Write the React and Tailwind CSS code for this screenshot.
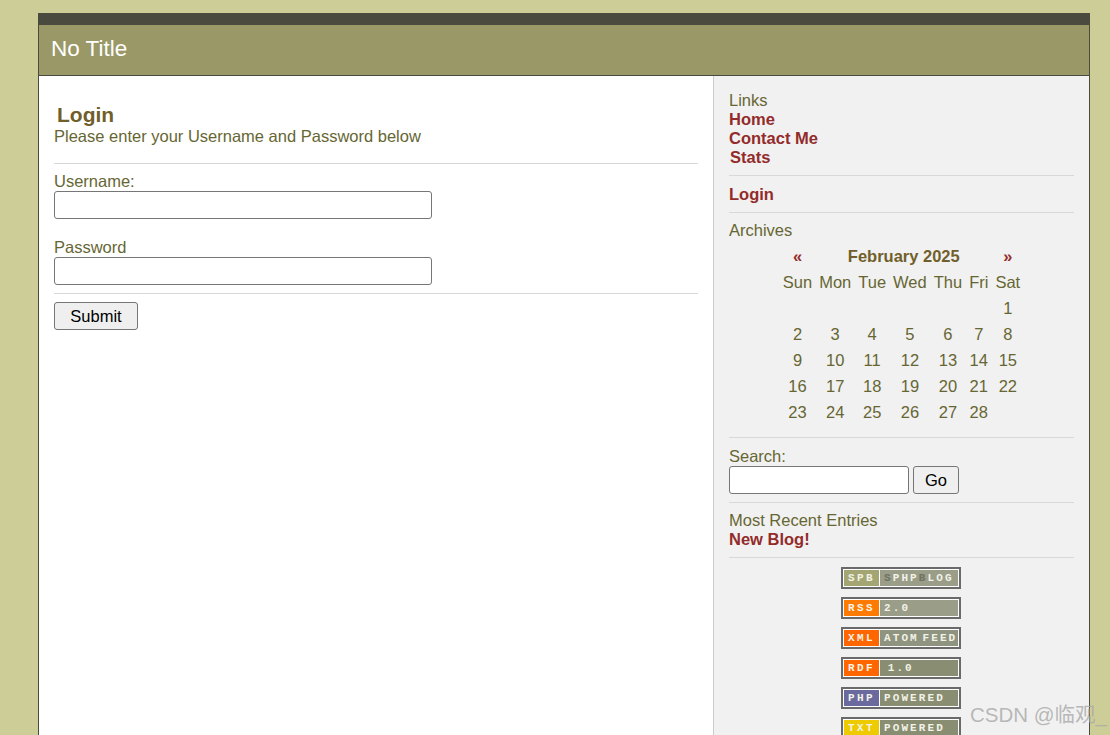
import React from 'react';

const calendarWeeks = [
    ['', '', '', '', '', '', '1'],
    ['2', '3', '4', '5', '6', '7', '8'],
    ['9', '10', '11', '12', '13', '14', '15'],
    ['16', '17', '18', '19', '20', '21', '22'],
    ['23', '24', '25', '26', '27', '28', ''],
];

const dimLetter = 'text-[#6f7263]';

const badges = [
    {
        left: 'SPB',
        right: (
            <>
                <span className={dimLetter}>S</span>PHP<span className={dimLetter}>B</span>LOG
            </>
        ),
        leftBg: 'bg-[#a3a572]',
        rightBg: 'bg-[#9a9d88]',
    },
    { left: 'RSS', right: '2.0', leftBg: 'bg-[#ff7a00]', rightBg: 'bg-[#9a9d88]' },
    { left: 'XML', right: 'ATOM FEED', leftBg: 'bg-[#ff6600]', rightBg: 'bg-[#8f9480]' },
    { left: 'RDF', right: ' 1.0', leftBg: 'bg-[#ff6600]', rightBg: 'bg-[#898d72]' },
    { left: 'PHP', right: 'POWERED', leftBg: 'bg-[#6a6a9f]', rightBg: 'bg-[#898d72]' },
    { left: 'TXT', right: 'POWERED', leftBg: 'bg-[#eecb00]', rightBg: 'bg-[#898d72]' },
];

function Badge({ left, right, leftBg, rightBg }) {
    return (
        <div className="flex h-[22px] w-[120px] shrink-0 border-2 border-[#6a6a6a] bg-white p-px font-['Liberation_Mono',monospace] text-[11px] font-bold leading-[16px] tracking-[2.1px] text-[#f2f2e6] [word-spacing:-5px]">
            <span className={`w-[35px] shrink-0 text-center tracking-[2.4px] ${leftBg}`}>{left}</span>
            <span className={`ml-px min-w-0 flex-1 overflow-hidden whitespace-pre pl-[4px] ${rightBg}`}>{right}</span>
        </div>
    );
}

function Divider({ className = '' }) {
    return <div className={`h-px bg-[#d8d8d8] ${className}`} />;
}

function Sidebar() {
    return (
        <aside className="w-[376px] shrink-0 border-l border-[#cccccc] bg-[#f1f1f1] px-[15px] pt-[15px]">
            <div>Links</div>
            <a className="block font-bold text-[#932b2b]">Home</a>
            <a className="block font-bold text-[#932b2b]">Contact Me</a>
            <a className="ml-px block font-bold text-[#932b2b]">Stats</a>
            <Divider className="mt-[8px]" />
            <a className="mt-[9px] block font-bold text-[#932b2b]">Login</a>
            <Divider className="mt-[8px]" />
            <div className="mt-[8px]">Archives</div>

            {/* Calendar */}
            <table className="mx-auto mt-[3px] border-separate border-spacing-x-[3px] border-spacing-y-0 text-center">
                <tbody>
                    <tr className="h-[26px]">
                        <td className="font-bold text-[#932b2b]">«</td>
                        <td colSpan={5} className="font-bold text-[#705f2a]">February 2025</td>
                        <td className="font-bold text-[#932b2b]">»</td>
                    </tr>
                    <tr className="h-[26px]">
                        {['Sun', 'Mon', 'Tue', 'Wed', 'Thu', 'Fri', 'Sat'].map((day) => (
                            <td key={day} className="px-[2px]">{day}</td>
                        ))}
                    </tr>
                    {calendarWeeks.map((week, i) => (
                        <tr key={i} className="h-[26px]">
                            {week.map((day, j) => (
                                <td key={j} className="px-[2px]">{day}</td>
                            ))}
                        </tr>
                    ))}
                </tbody>
            </table>

            <Divider className="mt-[12px]" />
            <div className="mt-[9px]">Search:</div>
            <div className="flex gap-[4px]">
                <input className="h-[28px] w-[180px] rounded-[3px] border border-[#767676] bg-white" />
                <button className="h-[28px] w-[46px] rounded-[3px] border border-[#767676] bg-[#efefef] text-black">Go</button>
            </div>
            <Divider className="mt-[8px]" />
            <div className="mt-[8px]">Most Recent Entries</div>
            <a className="block font-bold text-[#932b2b]">New Blog!</a>
            <Divider className="mt-[8px]" />

            <div className="ml-[-1px] mt-[9px] flex flex-col items-center gap-[8px]">
                {badges.map((badge) => (
                    <Badge key={badge.left} {...badge} />
                ))}
            </div>
        </aside>
    );
}

function LoginForm() {
    return (
        <main className="flex-1 bg-white px-[15px] pt-[26px]">
            <h2 className="ml-[3px] text-[21px] font-bold leading-[25px] text-[#705f2a]">Login</h2>
            <p>Please enter your Username and Password below</p>
            <Divider className="mt-[17px]" />
            <label className="mt-[8px] block">Username:</label>
            <input className="block h-[28px] w-[378px] rounded-[3px] border border-[#767676] bg-white" />
            <label className="mt-[19px] block">Password</label>
            <input className="block h-[28px] w-[378px] rounded-[3px] border border-[#767676] bg-white" />
            <Divider className="mt-[8px]" />
            <button className="mt-[8px] h-[28px] w-[84px] rounded-[3px] border border-[#767676] bg-[#efefef] text-black">Submit</button>
        </main>
    );
}

function App() {
    return (
        <div className="relative h-[735px] overflow-hidden bg-[#cdcd98] pl-[38px] pr-[20px] pt-[13px] font-['Liberation_Sans',Arial,sans-serif] text-[16.5px] leading-[19px] text-[#666633]">
            <div className="flex h-full flex-col border-x border-[#4b4a3f]">
                <div className="h-[12px] shrink-0 bg-[#4b4a3f]" />
                <header className="flex h-[51px] shrink-0 items-center border-b border-[#4b4a3f] bg-[#9a9866] pb-[3px] pl-[12px] text-[22.5px] text-white">
                    No Title
                </header>
                <div className="flex min-h-0 flex-1">
                    <LoginForm />
                    <Sidebar />
                </div>
            </div>

            {/* Watermark */}
            <div className="absolute left-[970px] top-[703px] font-['Liberation_Sans','Noto_Sans_CJK_SC',sans-serif] text-[20.5px] leading-[24px] whitespace-nowrap text-[#a8a8a8]/80">
                CSDN @临观_
            </div>
        </div>
    );
}

export default App;
